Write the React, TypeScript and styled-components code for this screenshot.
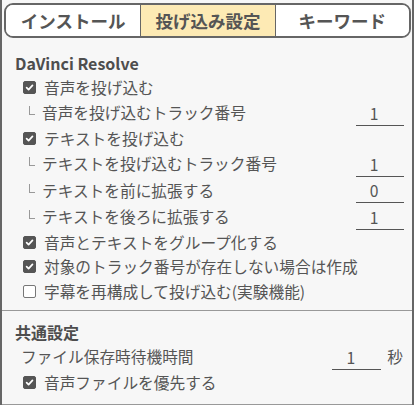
import React from "react";
import styled, { createGlobalStyle } from "styled-components";

const GlobalStyle = createGlobalStyle`
	html, body {
		margin: 0;
		padding: 0;
		background: #f7f7f7;
	}
	* {
		box-sizing: border-box;
	}
`;

const Panel = styled.div`
	width: 414px;
	height: 405px;
	background: #f7f7f7;
	border-left: 2px solid #666;
	border-right: 2px solid #666;
	font-family: "Noto Sans CJK JP", "Noto Sans", sans-serif;
	color: #555;
	overflow: hidden;
`;

const Tabs = styled.div`
	display: grid;
	grid-template-columns: 1fr 1fr 1fr;
	height: 35px;
	margin: 3px 0 0 2px;
	width: 407px;
	border: 2px solid #666;
	border-radius: 9px;
	overflow: hidden;
	background: #fff;
`;

const Tab = styled.div<{ $active?: boolean; $first?: boolean }>`
	display: flex;
	align-items: center;
	justify-content: center;
	font-size: 17.5px;
	font-weight: 700;
	color: #555;
	background: ${p => (p.$active ? "#fdeab4" : "#fff")};
	border-left: ${p => (p.$first ? "none" : "1.5px solid #666")};
`;

const Section = styled.div<{ $pad: string }>`
	padding: ${p => p.$pad};
	border-bottom: 1px solid #999;
`;

const Heading = styled.div`
	font-size: 16px;
	font-weight: 700;
	line-height: 23px;
	padding-left: 13px;
	color: #4e4e4e;
`;

const CheckRow = styled.label`
	display: flex;
	align-items: center;
	height: 24.5px;
	padding-left: 21px;
	font-size: 15.7px;
	gap: 8px;
`;

const Box = styled.span<{ $checked?: boolean }>`
	display: inline-flex;
	align-items: center;
	justify-content: center;
	width: 13px;
	height: 13px;
	border-radius: 2px;
	background: ${p => (p.$checked ? "#555" : "#fff")};
	border: 1px solid ${p => (p.$checked ? "#555" : "#777")};
	flex-shrink: 0;
`;

const InputRow = styled.div<{ $indent?: boolean }>`
	display: flex;
	align-items: center;
	height: 26.5px;
	padding-left: ${p => (p.$indent ? "25px" : "19px")};
	padding-right: 8px;
	font-size: 15.7px;
`;

const Branch = styled.span`
	width: 6px;
	height: 9px;
	margin: -4px 7px 0 2px;
	border-left: 1px solid #999;
	border-bottom: 1px solid #999;
	flex-shrink: 0;
`;

const Label = styled.span`
	flex: 1;
`;

const NumberInput = styled.input<{ $w: number }>`
	width: ${p => p.$w}px;
	border: none;
	border-bottom: 1px solid #555;
	background: transparent;
	font-family: inherit;
	font-size: 15.7px;
	color: #555;
	text-align: center;
	padding: 0 12px 0 0;
	height: 24px;
	margin-top: 2px;
	outline: none;
`;

const Unit = styled.span`
	margin-left: 6px;
	margin-right: 1px;
`;

const Check: React.FC<{ checked?: boolean }> = ({ checked }) => (
	<Box $checked={checked}>
		{checked && (
			<svg width="9" height="9" viewBox="0 0 10 10">
				<path d="M1.8 5.2 L4 7.4 L8.3 2.6" fill="none" stroke="#fff" strokeWidth="1.9" strokeLinecap="round" strokeLinejoin="round" />
			</svg>
		)}
	</Box>
);

const CheckItem: React.FC<{ checked?: boolean; label: string }> = ({ checked, label }) => (
	<CheckRow>
		<Check checked={checked} />
		<span>{label}</span>
	</CheckRow>
);

const SubInput: React.FC<{ label: string; value: string }> = ({ label, value }) => (
	<InputRow $indent>
		<Branch />
		<Label>{label}</Label>
		<NumberInput $w={48} defaultValue={value} />
	</InputRow>
);

const App: React.FC = () => {
	return (
		<>
			<GlobalStyle />
			<Panel>
				<Tabs>
					<Tab $first>インストール</Tab>
					<Tab $active>投げ込み設定</Tab>
					<Tab>キーワード</Tab>
				</Tabs>
				<Section $pad="14px 0 6px 0">
					<Heading>DaVinci Resolve</Heading>
					<CheckItem checked label="音声を投げ込む" />
					<SubInput label="音声を投げ込むトラック番号" value="1" />
					<CheckItem checked label="テキストを投げ込む" />
					<SubInput label="テキストを投げ込むトラック番号" value="1" />
					<SubInput label="テキストを前に拡張する" value="0" />
					<SubInput label="テキストを後ろに拡張する" value="1" />
					<CheckItem checked label="音声とテキストをグループ化する" />
					<CheckItem checked label="対象のトラック番号が存在しない場合は作成" />
					<CheckItem label="字幕を再構成して投げ込む(実験機能)" />
				</Section>
				<Section $pad="10px 0 9px 0">
					<Heading>共通設定</Heading>
					<InputRow>
						<Label>ファイル保存時待機時間</Label>
						<NumberInput $w={49} defaultValue="1" />
						<Unit>秒</Unit>
					</InputRow>
					<CheckItem checked label="音声ファイルを優先する" />
				</Section>
			</Panel>
		</>
	);
};

export default App;
